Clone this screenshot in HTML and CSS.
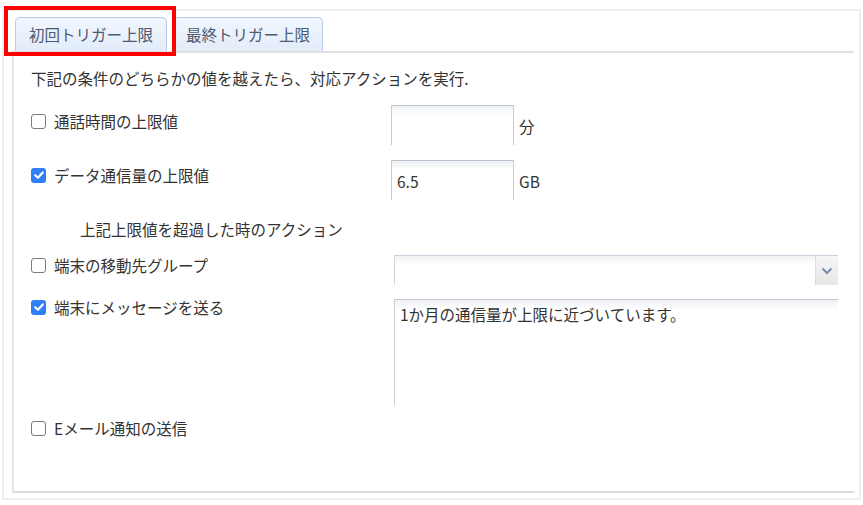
FILE: index.html
```html
<!DOCTYPE html>
<html lang="ja">
<head>
<meta charset="utf-8">
<link rel="stylesheet" href="styles.css">
</head>
<body>
<div class="frame">
  <div class="tabs">
    <div class="tab tab-first">初回トリガー上限</div>
    <div class="tab tab-second">最終トリガー上限</div>
  </div>
  <div class="panel">
    <p class="desc">下記の条件のどちらかの値を越えたら、対応アクションを実行.</p>

    <div class="row row-1">
      <div class="chk"><span class="box"></span><span class="lbl">通話時間の上限値</span></div>
      <div class="field"><span class="input input-small"></span><span class="unit">分</span></div>
    </div>

    <div class="row row-2">
      <div class="chk"><span class="box checked"><svg viewBox="0 0 14 14" width="14" height="14"><path d="M3.2 7.2 L5.9 9.8 L10.8 4.4" fill="none" stroke="#fff" stroke-width="2.2" stroke-linecap="round" stroke-linejoin="round"/></svg></span><span class="lbl">データ通信量の上限値</span></div>
      <div class="field"><span class="input input-small">6.5</span><span class="unit">GB</span></div>
    </div>

    <p class="action-title">上記上限値を超過した時のアクション</p>

    <div class="row row-3 row-wide">
      <div class="chk"><span class="box"></span><span class="lbl">端末の移動先グループ</span></div>
      <div class="select">
        <span class="select-value"></span>
        <span class="select-btn"><svg viewBox="0 0 12 8" width="12" height="8"><path d="M1.5 1.5 L6 6 L10.5 1.5" fill="none" stroke="#7d8db2" stroke-width="2.2"/></svg></span>
      </div>
    </div>

    <div class="row row-4 row-wide">
      <div class="chk"><span class="box checked"><svg viewBox="0 0 14 14" width="14" height="14"><path d="M3.2 7.2 L5.9 9.8 L10.8 4.4" fill="none" stroke="#fff" stroke-width="2.2" stroke-linecap="round" stroke-linejoin="round"/></svg></span><span class="lbl">端末にメッセージを送る</span></div>
      <div class="textarea">1か月の通信量が上限に近づいています。</div>
    </div>

    <div class="row row-5">
      <div class="chk"><span class="box"></span><span class="lbl">Eメール通知の送信</span></div>
    </div>
  </div>
</div>
<div class="highlight"></div>
</body>
</html>
```

FILE: styles.css
```css
html, body {
  margin: 0;
  padding: 0;
  background: #ffffff;
}

body {
  font-family: "Noto Sans CJK JP", "Noto Sans", sans-serif;
  font-size: 15.5px;
  color: #333333;
  width: 863px;
  height: 505px;
  overflow: hidden;
  position: relative;
}

.frame {
  box-sizing: border-box;
  margin: 9px 0 0 2px;
  width: 859px;
  height: 491px;
  border: 2px solid #efefef;
  padding: 6px 5px 0 8px;
}

.tabs {
  display: flex;
  align-items: flex-end;
  gap: 6px;
  padding-left: 3px;
  height: 34px;
}

.tab {
  box-sizing: border-box;
  height: 34px;
  border: 1px solid #b9cbe5;
  border-bottom: none;
  border-radius: 5px 5px 0 0;
  background: linear-gradient(to bottom, #f1f6fd 0%, #e2ecf9 100%);
  color: #4d5a73;
  line-height: 32px;
  text-align: center;
  white-space: nowrap;
}

.tab-first {
  width: 152px;
}

.tab-second {
  width: 150px;
}

.panel {
  box-sizing: border-box;
  width: 842px;
  height: 442px;
  border-top: 2px solid #e0e0e0;
  border-left: 2px solid #e4e4e4;
  border-bottom: 2px solid #dcdcdc;
  padding: 14px 0 0 17px;
  display: flex;
  flex-direction: column;
}

.desc {
  margin: 0;
  line-height: 22px;
  white-space: nowrap;
}

.row {
  display: flex;
  align-items: flex-start;
}

.chk {
  width: 360px;
  flex: none;
  display: flex;
  align-items: center;
  gap: 8px;
  line-height: 20px;
  white-space: nowrap;
}

.row-wide .chk {
  width: 363px;
}

.box {
  box-sizing: border-box;
  width: 15px;
  height: 15px;
  border: 1.6px solid #7a7a7a;
  border-radius: 3px;
  background: #fff;
  flex: none;
  display: flex;
  align-items: center;
  justify-content: center;
}

.box.checked {
  border: none;
  background: #2f7ff5;
}

.box svg {
  display: block;
}

.row-1 { margin-top: 16px; }
.row-1 .chk { margin-top: 6px; }

.row-2 { margin-top: 15px; }
.row-2 .chk { margin-top: 5px; }

.row-3 { margin-top: 15px; }
.row-3 .chk { margin-top: 0; }

.row-4 { margin-top: 14px; }
.row-4 .chk { margin-top: -2px; }

.row-5 { margin-top: 13px; }

.field {
  display: flex;
  align-items: center;
  gap: 5px;
}

.input {
  box-sizing: border-box;
  display: block;
  border: 1px solid #c8cbd9;
  border-top-color: #bcc0ce;
  border-bottom: none;
  background: linear-gradient(to bottom, #eef1f4 0px, #ffffff 9px);
  color: #333;
  padding-left: 5px;
}

.input-small {
  width: 123px;
  height: 40px;
  line-height: 40px;
}

.unit {
  line-height: 20px;
  margin-top: 2px;
}

.action-title {
  margin: 18px 0 0 0;
  padding-left: 49px;
  line-height: 22px;
}

.select {
  box-sizing: border-box;
  width: 444px;
  height: 30px;
  display: flex;
  border-top: 1px solid #cdd0dc;
  border-left: 1px solid #d0d3de;
  background: linear-gradient(to bottom, #f0f2f5 0px, #ffffff 9px);
}

.select-value {
  flex: 1;
}

.select-btn {
  width: 22px;
  height: 29px;
  border-left: 1px solid #dcdcdc;
  background: linear-gradient(to bottom, #f6f6f6, #e6e6e6);
  display: flex;
  align-items: center;
  justify-content: center;
}

.textarea {
  box-sizing: border-box;
  width: 444px;
  height: 106px;
  border-top: 1px solid #c4c7d5;
  border-left: 1px solid #c8cbd9;
  background: linear-gradient(to bottom, #eef1f4 0px, #ffffff 10px);
  padding: 3px 0 0 5px;
  line-height: 22px;
  white-space: nowrap;
}

.highlight {
  position: absolute;
  left: 4px;
  top: 6px;
  width: 172px;
  height: 50px;
  box-sizing: border-box;
  border: 4px solid #ff0000;
}
```
